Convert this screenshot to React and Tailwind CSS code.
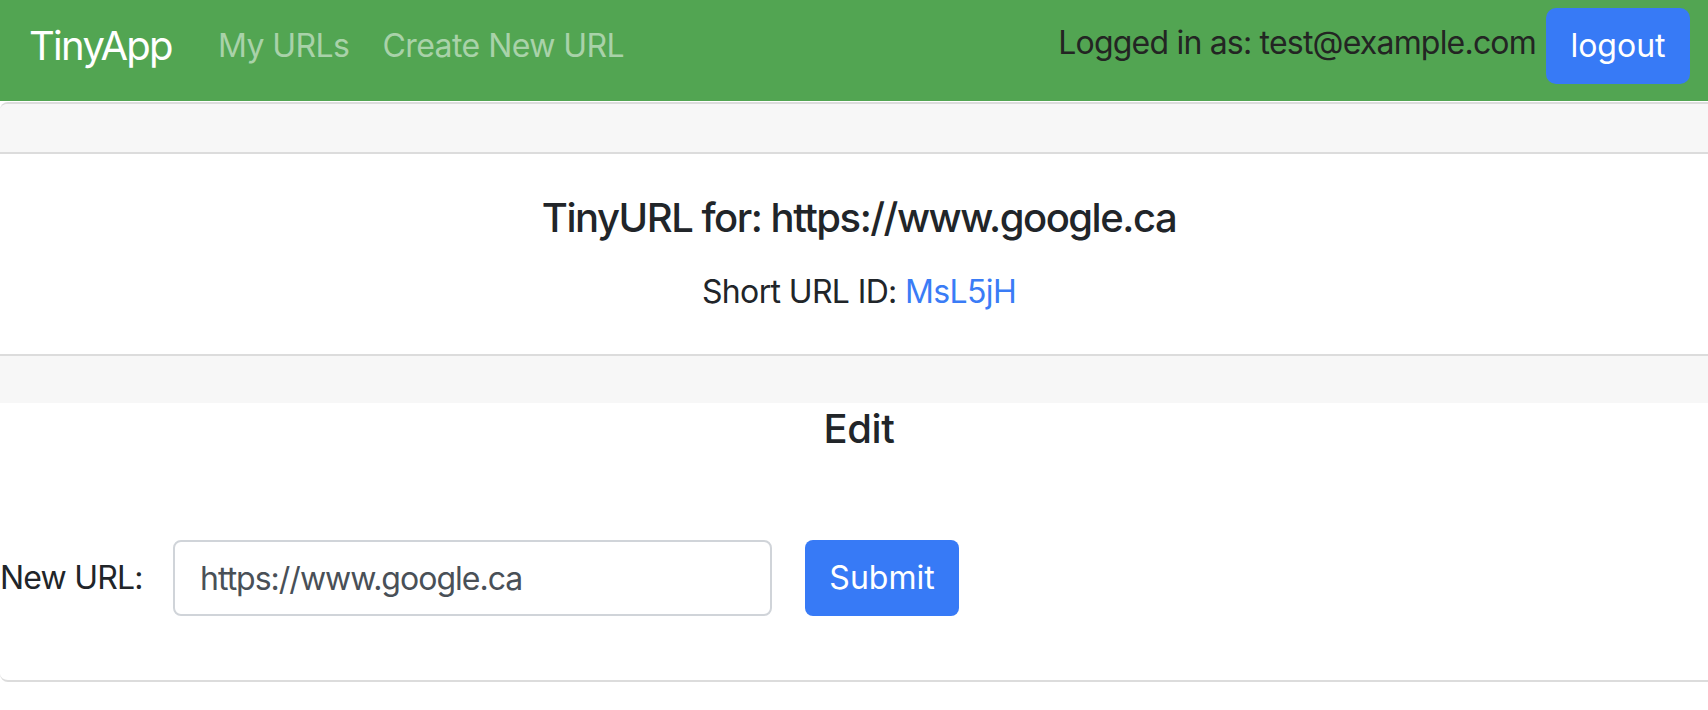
export default function App() {
  const font = { fontFamily: 'Inter, "Noto Sans", "Liberation Sans", sans-serif' };
  return (
    <div className="w-full min-h-[710px] bg-white overflow-hidden text-[#212529]" style={font}>
      <nav className="h-[101px] bg-[#52a552] flex items-center pb-[10px] pl-[29px] pr-[18px]">
        <a className="text-[40px] leading-[48px] text-white tracking-[-0.043em]">TinyApp</a>
        <div className="flex items-center ml-[46px] gap-[33px] tracking-[-0.035em]">
          <a className="text-[32px] leading-[48px] text-[#a9d2a9]">My URLs</a>
          <a className="text-[32px] leading-[48px] text-[#a9d2a9]">Create New URL</a>
        </div>
        <div className="ml-auto flex items-center">
          <span className="text-[32px] leading-[48px] text-[#232523] mb-[6px] tracking-[-0.025em]">Logged in as: test@example.com</span>
          <button className="ml-[10px] h-[76px] w-[144px] rounded-[10px] bg-[#377af6] text-white text-[32px] leading-[48px]">
            logout
          </button>
        </div>
      </nav>

      <div className="w-[1718px] mt-[1px] border-y-2 border-[#dcdcdc] rounded-[8px] overflow-hidden">
        <div className="h-[50px] bg-[#f7f7f7] border-b-2 border-[#dcdcdc]"></div>
        <div className="pt-[40px] pb-[38px] text-center">
          <h5 className="text-[40px] leading-[48px] font-medium mb-[26px] tracking-[-0.037em]">TinyURL for: https://www.google.ca</h5>
          <p className="text-[32px] leading-[48px] tracking-[-0.02em]">
            Short URL ID: <a className="text-[#3a7cf6]">MsL5jH</a>
          </p>
        </div>
        <div className="h-[49px] bg-[#f7f7f7] border-t-2 border-[#dcdcdc]"></div>
        <div className="pb-[64px]">
          <h3 className="text-center text-[40px] leading-[48px] font-medium mt-[2px] tracking-[-0.01em]">Edit</h3>
          <form className="flex items-center mt-[87px]">
            <label className="w-[173px] text-[32px] leading-[48px] tracking-[-0.025em]">New URL:</label>
            <input
              className="w-[599px] h-[76px] px-[25px] border-2 border-[#d0d4d9] rounded-[8px] text-[32px] text-[#495057] outline-none tracking-[-0.031em]"
              style={font}
              defaultValue="https://www.google.ca"
            />
            <button
              type="button"
              className="ml-[33px] w-[154px] h-[76px] rounded-[8px] bg-[#377af6] text-white text-[32px] leading-[48px]"
            >
              Submit
            </button>
          </form>
        </div>
      </div>
    </div>
  );
}
